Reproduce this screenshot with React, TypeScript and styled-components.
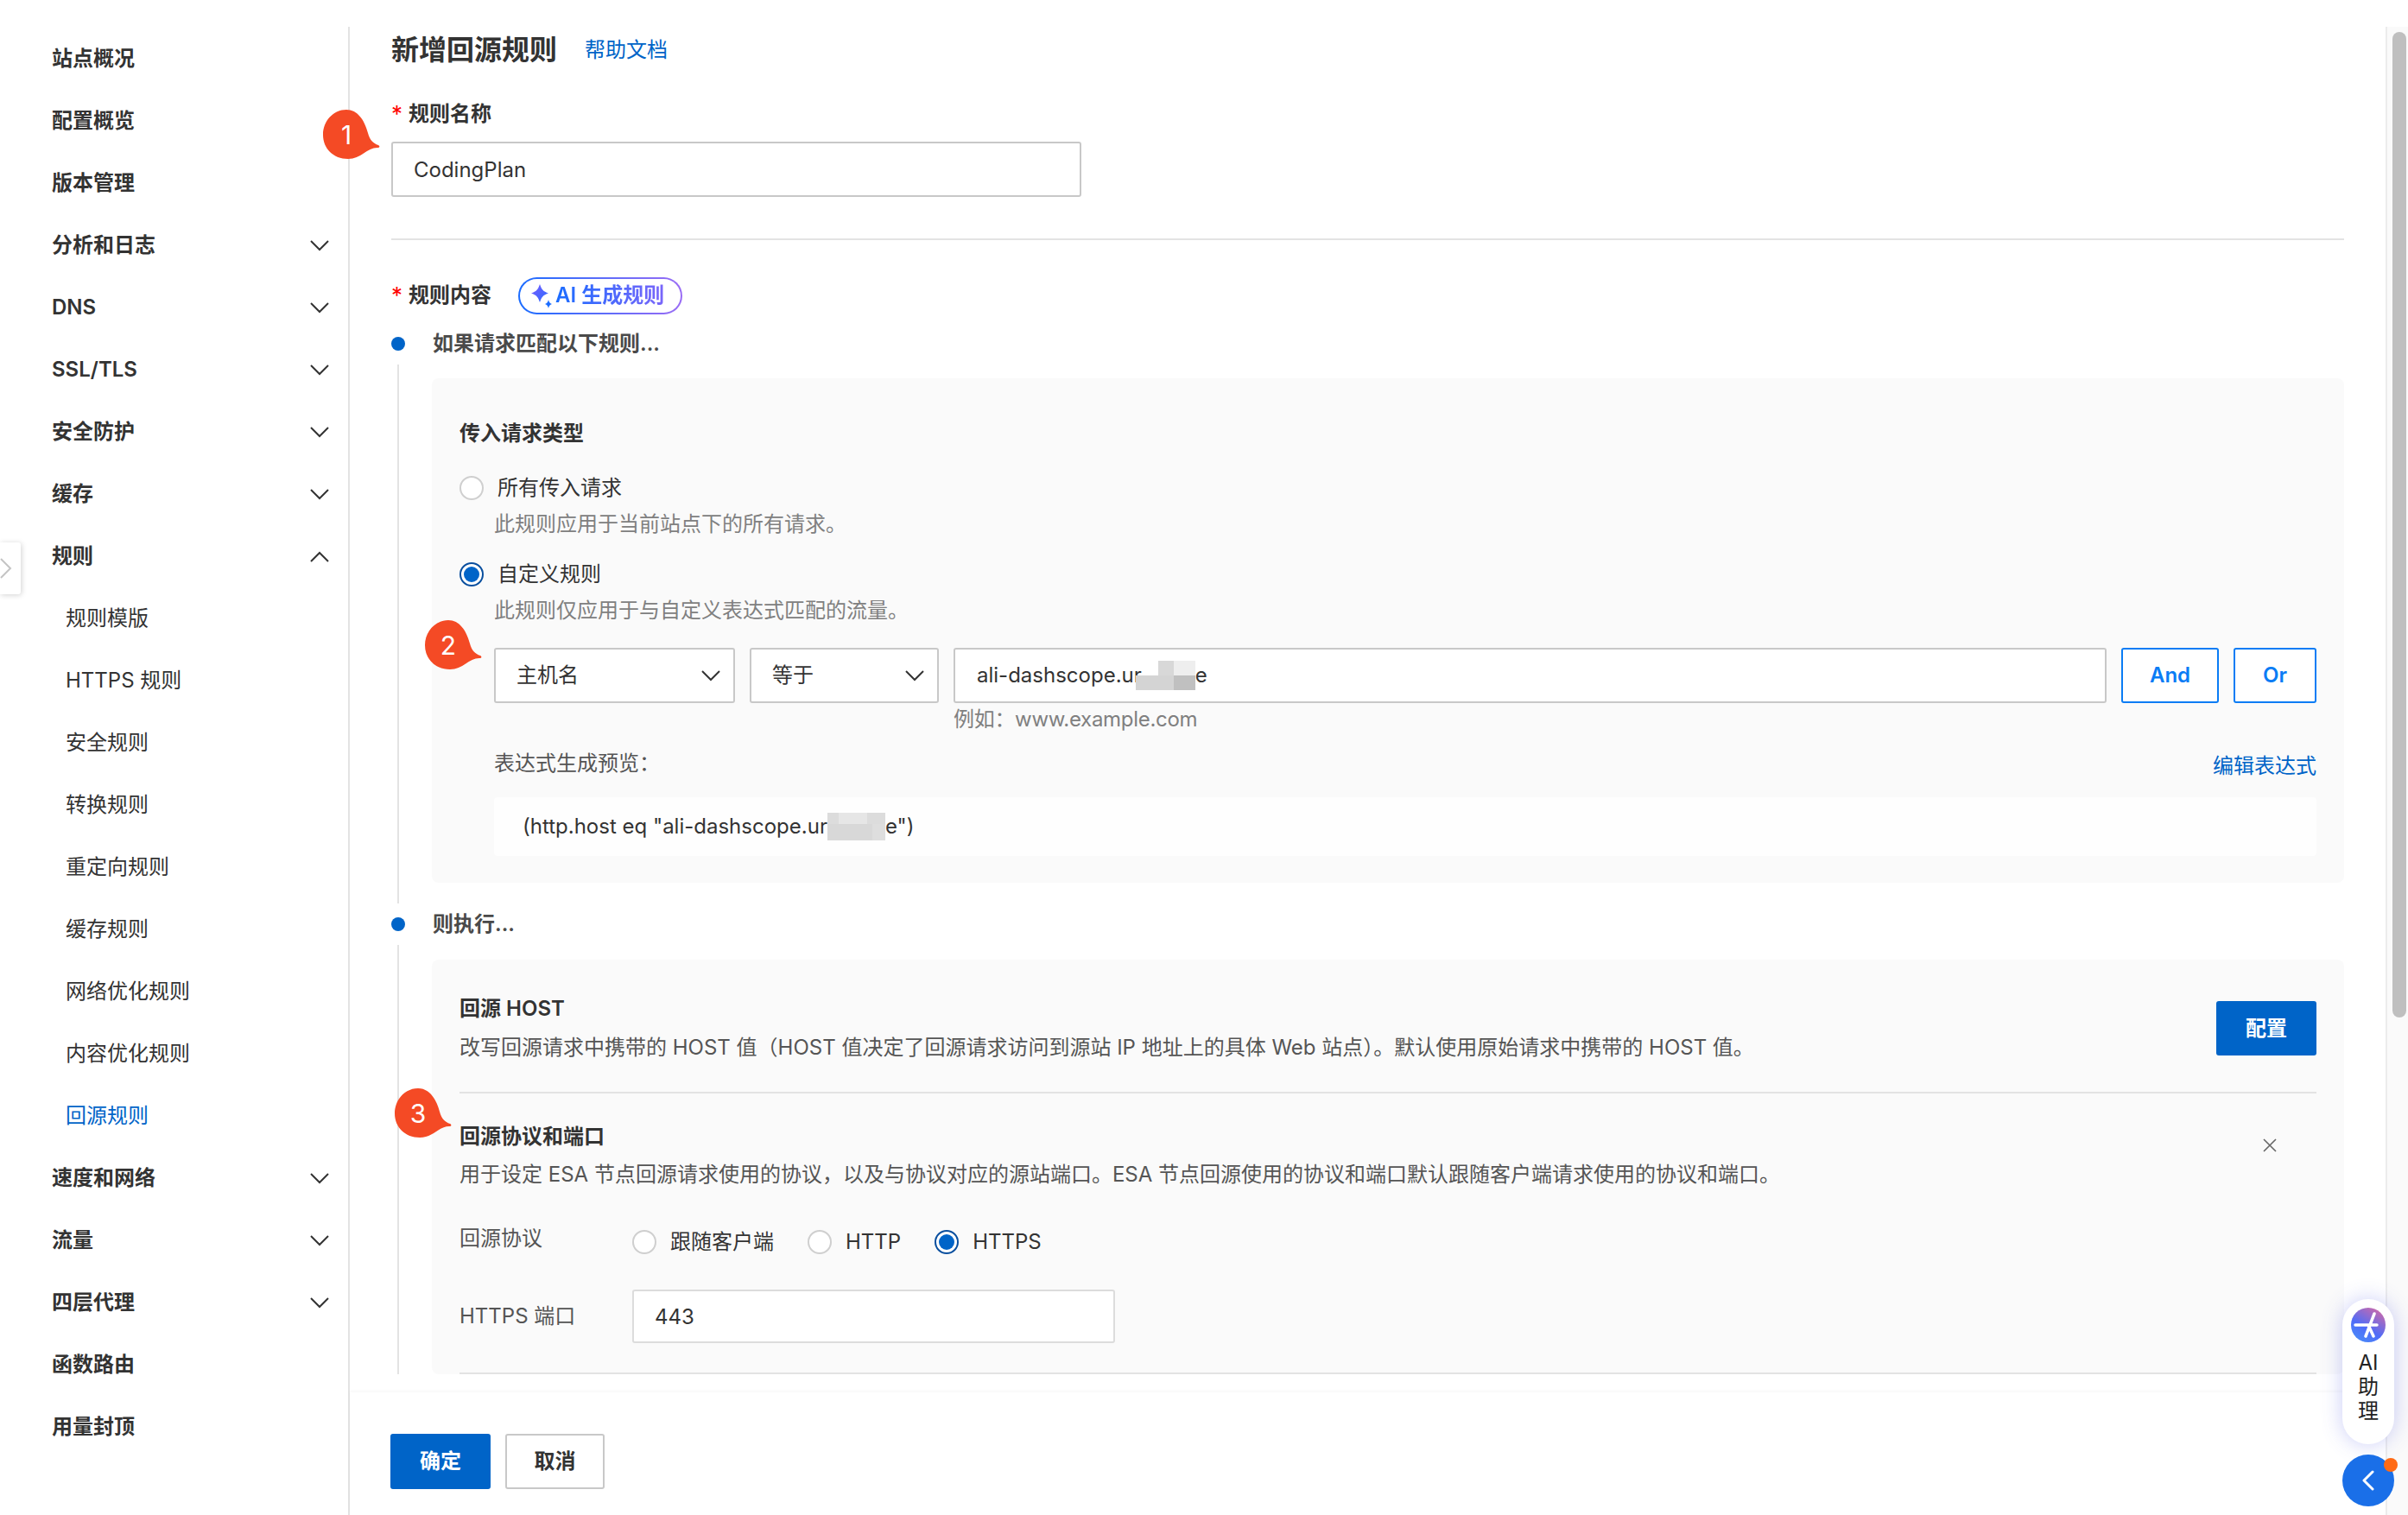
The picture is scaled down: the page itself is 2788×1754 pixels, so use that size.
import React from "react";
import styled, { createGlobalStyle } from "styled-components";

const GlobalStyle = createGlobalStyle`
  html, body {
    margin: 0;
    padding: 0;
    width: 2788px;
    height: 1754px;
    overflow: hidden;
    background: #fff;
  }
  * { box-sizing: border-box; }
  body {
    font-family: Inter, "Noto Sans CJK SC", sans-serif;
    font-size: 24px;
    line-height: 36px;
    color: #333;
  }
`;

const Shell = styled.div`
  display: flex;
  position: relative;
  width: 2788px;
  height: 1754px;
  padding-top: 31px;
`;

/* sidebar */
const Sidebar = styled.nav`
  width: 405px;
  flex: none;
  border-right: 2px solid #e3e3e3;
  padding-top: 1px;
`;

const NavRow = styled.div<{ $sub?: boolean; $active?: boolean }>`
  height: 72px;
  display: flex;
  align-items: center;
  justify-content: space-between;
  padding-left: ${(p) => (p.$sub ? "76px" : "60px")};
  padding-right: 22px;
  font-weight: ${(p) => (p.$sub ? 400 : 600)};
  color: ${(p) => (p.$active ? "#0064c8" : "#333")};
`;

const CollapseTab = styled.div`
  position: absolute;
  left: 0;
  top: 628px;
  width: 24px;
  height: 60px;
  background: #fff;
  border-radius: 0 3px 3px 0;
  box-shadow: 1px 1px 6px rgba(0, 0, 0, 0.18);
  display: flex;
  align-items: center;
`;

/* main column */
const Main = styled.main`
  flex: 1;
  min-width: 0;
  display: flex;
  flex-direction: column;
`;

const Content = styled.div`
  flex: 1;
  min-height: 0;
  overflow: hidden;
  padding: 0 48px;
`;

const TitleRow = styled.div`
  height: 52px;
  padding-top: 1px;
  display: flex;
  align-items: center;
  gap: 32px;
`;

const Title = styled.h1`
  margin: 0;
  font-size: 32px;
  font-weight: 600;
  color: #333;
`;

const Link = styled.a`
  color: #0064c8;
  font-size: 24px;
`;

const FieldLabel = styled.div<{ $top: number }>`
  margin-top: ${(p) => p.$top}px;
  height: 36px;
  display: flex;
  align-items: center;
  font-weight: 600;
  &::before {
    content: "*";
    color: #f00;
    width: 20px;
    font-size: 26px;
    font-weight: 400;
  }
`;

const TextInput = styled.input<{ $width: number; $top: number; $height: number; $border: string }>`
  display: block;
  width: ${(p) => p.$width}px;
  height: ${(p) => p.$height}px;
  margin-top: ${(p) => p.$top}px;
  border: 2px solid ${(p) => p.$border};
  border-radius: 3px;
  padding: 0 24px;
  background: #fff;
  outline: none;
  font: inherit;
  color: #333;
`;

const Divider = styled.hr<{ $top: number }>`
  margin: ${(p) => p.$top}px 0 0;
  border: 0;
  height: 2px;
  background: #e3e3e3;
`;

const ContentLabelRow = styled.div`
  margin-top: 42px;
  height: 44px;
  display: flex;
  align-items: center;
  gap: 31px;
`;

const AiPill = styled.button`
  width: 190px;
  height: 43px;
  border-radius: 22px;
  border: 2px solid transparent;
  background: linear-gradient(#fff, #fff) padding-box,
    linear-gradient(90deg, #1a6cff, #9a6cf5) border-box;
  display: flex;
  align-items: center;
  padding: 0 0 0 12px;
  gap: 3px;
  font: inherit;
`;

const GradientText = styled.span`
  background: linear-gradient(90deg, #1a6cff, #7a66fa);
  -webkit-background-clip: text;
  background-clip: text;
  color: transparent;
  font-weight: 600;
`;

const StepHead = styled.div<{ $top: number }>`
  margin-top: ${(p) => p.$top}px;
  height: 36px;
  display: flex;
  align-items: center;
  gap: 32px;
  font-weight: 600;
  color: #4a4a4a;
  &::before {
    content: "";
    width: 16px;
    height: 16px;
    border-radius: 50%;
    background: #0064c8;
  }
`;

const StepBody = styled.div<{ $pad: number; $bottom: number }>`
  margin: 6px 0 0 7px;
  border-left: 2px solid #e3e3e3;
  padding: ${(p) => p.$pad}px 0 ${(p) => p.$bottom}px 38px;
`;

const Panel = styled.section<{ $pad: number; $bottom: number }>`
  background: #fafafa;
  border-radius: 8px;
  padding: ${(p) => p.$pad}px 32px ${(p) => p.$bottom}px 32px;
`;

const SectionTitle = styled.div<{ $top?: number }>`
  margin-top: ${(p) => p.$top ?? 0}px;
  height: 36px;
  font-weight: 600;
  color: #333;
`;

const Desc = styled.div<{ $top: number; $indent?: number; $tone?: string }>`
  margin-top: ${(p) => p.$top}px;
  margin-left: ${(p) => p.$indent ?? 0}px;
  height: 36px;
  color: ${(p) => p.$tone ?? "#808080"};
`;

const RadioRow = styled.label<{ $top: number }>`
  margin-top: ${(p) => p.$top}px;
  height: 36px;
  display: flex;
  align-items: center;
  gap: 16px;
`;

const RadioDot = styled.span<{ $on?: boolean }>`
  flex: none;
  width: 28px;
  height: 28px;
  border-radius: 50%;
  background: #fff;
  border: 2px solid ${(p) => (p.$on ? "#0a4f9e" : "#cfcfcf")};
  display: flex;
  align-items: center;
  justify-content: center;
  &::after {
    content: "";
    display: ${(p) => (p.$on ? "block" : "none")};
    width: 18px;
    height: 18px;
    border-radius: 50%;
    background: #0064c8;
  }
`;

const ConditionGrid = styled.div`
  margin: 25px 0 0 40px;
  display: grid;
  grid-template-columns: 279px 219px 1335px 113px 96px;
  grid-auto-rows: auto;
  column-gap: 17px;
`;

const Select = styled.div`
  height: 64px;
  background: #fff;
  border: 2px solid #c8c8c8;
  border-radius: 3px;
  display: flex;
  align-items: center;
  justify-content: space-between;
  padding: 0 15px 0 24px;
`;

const ValueBox = styled.div`
  height: 64px;
  background: #fff;
  border: 2px solid #c8c8c8;
  border-radius: 3px;
  display: flex;
  align-items: center;
  padding-left: 25px;
  color: #333;
`;

const OutlineBtn = styled.button`
  height: 64px;
  background: #fff;
  border: 2px solid #0a7cf5;
  border-radius: 3px;
  color: #0a7cf5;
  font: inherit;
  font-weight: 600;
`;

const Hint = styled.div`
  grid-column: 3;
  margin-top: 1px;
  height: 36px;
  color: #808080;
  letter-spacing: -0.3px;
`;

const PreviewHead = styled.div`
  margin: 15px 0 0 40px;
  display: flex;
  justify-content: space-between;
  height: 36px;
  color: #555;
`;

const PreviewLink = styled(Link)`
  padding-top: 3px;
`;

const PreviewBox = styled.div`
  margin: 21px 0 0 40px;
  height: 68px;
  background: #fefefe;
  border-radius: 4px;
  display: flex;
  align-items: center;
  padding-left: 33px;
  color: #333;
  white-space: pre;
`;

const ActionRow = styled.div`
  display: flex;
  align-items: center;
  justify-content: space-between;
`;

const PrimaryBtn = styled.button<{ $width: number; $height: number }>`
  width: ${(p) => p.$width}px;
  height: ${(p) => p.$height}px;
  background: #0064c8;
  border: 0;
  border-radius: 3px;
  color: #fff;
  font: inherit;
  font-weight: 600;
`;

const CloseWrap = styled.span`
  margin: 8px 46px 0 0;
  display: flex;
`;

const FormRow = styled.div<{ $top: number }>`
  margin-top: ${(p) => p.$top}px;
  display: grid;
  grid-template-columns: 200px 1fr;
  align-items: center;
  color: #555;
`;

const ProtoLabel = styled.span`
  margin-top: -8px;
`;

const RadioGroup = styled.div`
  height: 36px;
  display: flex;
  align-items: center;
  color: #333;
`;

const RadioOption = styled.label<{ $gapAfter: number }>`
  display: flex;
  align-items: center;
  gap: 16px;
  margin-right: ${(p) => p.$gapAfter}px;
`;

const Footer = styled.footer`
  height: 142px;
  flex: none;
  background: #fff;
  box-shadow: 0 -2px 4px rgba(0, 0, 0, 0.03);
  padding: 48px 47px;
  display: flex;
  align-items: flex-start;
  gap: 17px;
`;

const CancelBtn = styled.button`
  width: 115px;
  height: 64px;
  background: #fff;
  border: 2px solid #c8c8c8;
  border-radius: 3px;
  font: inherit;
  font-weight: 600;
  color: #333;
`;

/* scrollbar */
const ScrollTrack = styled.div`
  flex: none;
  width: 26px;
  background: #fafafa;
  border-left: 2px solid #ececec;
  padding: 6px 2px 0 6px;
`;

const ScrollThumb = styled.div`
  width: 16px;
  height: 1141px;
  border-radius: 8px;
  background: #bfbfbf;
`;

/* numbered callouts */
const Callout = styled.div<{ $x: number; $y: number }>`
  position: absolute;
  left: ${(p) => p.$x}px;
  top: ${(p) => p.$y}px;
  width: 66px;
  height: 57px;
  z-index: 3;
`;

const CalloutNum = styled.span`
  position: absolute;
  left: 0;
  top: 0;
  width: 54px;
  height: 57px;
  display: flex;
  align-items: center;
  justify-content: center;
  color: #fff;
  font-size: 30px;
`;

/* floating assistant */
const AssistantPill = styled.div`
  position: absolute;
  left: 2712px;
  top: 1504px;
  width: 60px;
  height: 168px;
  border-radius: 30px;
  background: #fff;
  box-shadow: 0 0 24px rgba(80, 90, 230, 0.3);
  display: flex;
  flex-direction: column;
  align-items: center;
  padding-top: 10px;
  z-index: 4;
`;

const AssistantText = styled.div`
  margin-top: 10px;
  font-size: 24px;
  line-height: 28px;
  text-align: center;
  color: #222;
  width: 24px;
`;

const AssistantToggle = styled.div`
  position: absolute;
  left: 2712px;
  top: 1684px;
  width: 60px;
  height: 60px;
  border-radius: 50%;
  background: #1a6fe8;
  display: flex;
  align-items: center;
  justify-content: center;
  z-index: 4;
  &::after {
    content: "";
    position: absolute;
    right: -4px;
    top: 4px;
    width: 16px;
    height: 16px;
    border-radius: 50%;
    background: #ff6a14;
  }
`;

const MosaicSlot = styled.svg`
  margin-left: -7px;
`;

const Chevron = ({ up, w = 22, color = "#333" }: { up?: boolean; w?: number; color?: string }) => (
  <svg width={w} height={13} viewBox="0 0 22 13" fill="none">
    <path d={up ? "M1 12 L11 2 L21 12" : "M1 1 L11 11 L21 1"} stroke={color} strokeWidth="2" />
  </svg>
);

const CalloutShape = () => (
  <svg width="66" height="57" viewBox="0 0 66 57">
    <path
      d="M27 0C40 0 48 12 52 27C54 35 58 39 64 41C66 42 66 44 63 44C51 44 44 57 29 57C12 57 0 45 0 29C0 13 12 0 27 0Z"
      fill="#f44a25"
    />
  </svg>
);

const Sparkle = () => (
  <svg width="26" height="32" viewBox="0 0 26 32">
    <defs>
      <linearGradient id="spark" x1="0" y1="0" x2="1" y2="1">
        <stop offset="0" stopColor="#7a5cff" />
        <stop offset="1" stopColor="#2a6cff" />
      </linearGradient>
    </defs>
    <path d="M11 3C13 9 15 11.500 21 13.500C15 15.500 13 18 11 24C9 18 7 15.500 1 13.500C7 11.500 9 9 11 3Z" fill="url(#spark)" />
    <path d="M21 21C21.800 24 22.500 25 25 26C22.500 27 21.800 28 21 31C20.200 28 19.500 27 17 26C19.500 25 20.200 24 21 21Z" fill="#1a6cff" />
  </svg>
);

const AiLogo = () => (
  <svg width="40" height="40" viewBox="0 0 40 40">
    <defs>
      <linearGradient id="logo" x1="0.2" y1="1" x2="0.8" y2="0">
        <stop offset="0" stopColor="#4a8cf8" />
        <stop offset="0.4" stopColor="#4f6cf8" />
        <stop offset="1" stopColor="#d06aa8" />
      </linearGradient>
    </defs>
    <circle cx="20" cy="20" r="20" fill="url(#logo)" />
    <path d="M5 20H30M27 7L17 33M20 20L26 33" stroke="#fff" strokeWidth="3.500" strokeLinecap="round" fill="none" />
  </svg>
);

const MosaicA = () => (
  <MosaicSlot width="69" height="34" viewBox="0 0 69 34">
    <rect x="26" y="0" width="18" height="17" fill="#d8d8d8" />
    <rect x="44" y="0" width="25" height="17" fill="#eeeeee" />
    <rect x="0" y="17" width="44" height="17" fill="#d4d4d4" />
    <rect x="44" y="17" width="25" height="17" fill="#c0c0c0" />
  </MosaicSlot>
);

const MosaicB = () => (
  <svg width="67" height="32" viewBox="0 0 67 32">
    <rect x="0" y="0" width="13" height="13" fill="#dcdcdc" />
    <rect x="13" y="0" width="33" height="13" fill="#e6e6e6" />
    <rect x="46" y="0" width="21" height="13" fill="#dcdcdc" />
    <rect x="0" y="13" width="52" height="19" fill="#d8d8d8" />
    <rect x="52" y="13" width="15" height="19" fill="#dedede" />
  </svg>
);

const navItems = [
  { label: "站点概况" },
  { label: "配置概览" },
  { label: "版本管理" },
  { label: "分析和日志", arrow: true },
  { label: "DNS", arrow: true },
  { label: "SSL/TLS", arrow: true },
  { label: "安全防护", arrow: true },
  { label: "缓存", arrow: true },
  { label: "规则", open: true },
  { label: "规则模版", sub: true },
  { label: "HTTPS 规则", sub: true },
  { label: "安全规则", sub: true },
  { label: "转换规则", sub: true },
  { label: "重定向规则", sub: true },
  { label: "缓存规则", sub: true },
  { label: "网络优化规则", sub: true },
  { label: "内容优化规则", sub: true },
  { label: "回源规则", sub: true, active: true },
  { label: "速度和网络", arrow: true },
  { label: "流量", arrow: true },
  { label: "四层代理", arrow: true },
  { label: "函数路由" },
  { label: "用量封顶" },
];

export default function App() {
  return (
    <Shell>
      <GlobalStyle />
      <Sidebar>
        {navItems.map((item) => (
          <NavRow key={item.label} $sub={item.sub} $active={item.active}>
            <span>{item.label}</span>
            {item.arrow && <Chevron />}
            {item.open && <Chevron up />}
          </NavRow>
        ))}
      </Sidebar>
      <CollapseTab>
        <svg width="14" height="24" viewBox="0 0 14 24" fill="none">
          <path d="M1 1 L12 12 L1 23" stroke="#c4c4c4" strokeWidth="2" />
        </svg>
      </CollapseTab>

      <Main>
        <Content>
          <TitleRow>
            <Title>新增回源规则</Title>
            <Link>帮助文档</Link>
          </TitleRow>
          <FieldLabel $top={31}>规则名称</FieldLabel>
          <TextInput readOnly value="CodingPlan" $width={799} $height={64} $top={14} $border="#c8c8c8" />
          <Divider $top={48} />
          <ContentLabelRow>
            <FieldLabel $top={0}>规则内容</FieldLabel>
            <AiPill>
              <Sparkle />
              <GradientText>AI 生成规则</GradientText>
            </AiPill>
          </ContentLabelRow>

          <StepHead $top={16}>如果请求匹配以下规则...</StepHead>
          <StepBody $pad={16} $bottom={24}>
            <Panel $pad={46} $bottom={31}>
              <SectionTitle>传入请求类型</SectionTitle>
              <RadioRow $top={27}>
                <RadioDot />
                所有传入请求
              </RadioRow>
              <Desc $top={6} $indent={40}>此规则应用于当前站点下的所有请求。</Desc>
              <RadioRow $top={22}>
                <RadioDot $on />
                自定义规则
              </RadioRow>
              <Desc $top={6} $indent={40}>此规则仅应用于与自定义表达式匹配的流量。</Desc>
              <ConditionGrid>
                <Select>
                  主机名
                  <Chevron />
                </Select>
                <Select>
                  等于
                  <Chevron />
                </Select>
                <ValueBox>
                  ali-dashscope.ur
                  <MosaicA />
                  e
                </ValueBox>
                <OutlineBtn>And</OutlineBtn>
                <OutlineBtn>Or</OutlineBtn>
                <Hint>例如：www.example.com</Hint>
              </ConditionGrid>
              <PreviewHead>
                <span>表达式生成预览：</span>
                <PreviewLink>编辑表达式</PreviewLink>
              </PreviewHead>
              <PreviewBox>
                (http.host eq "ali-dashscope.ur
                <MosaicB />
                e")
              </PreviewBox>
            </Panel>
          </StepBody>

          <StepHead $top={6}>则执行...</StepHead>
          <StepBody $pad={17} $bottom={0}>
            <Panel $pad={39} $bottom={0}>
              <ActionRow>
                <div>
                  <SectionTitle>回源 HOST</SectionTitle>
                  <Desc $top={9} $tone="#555">
                    改写回源请求中携带的 HOST 值（HOST 值决定了回源请求访问到源站 IP 地址上的具体 Web 站点）。默认使用原始请求中携带的 HOST 值。
                  </Desc>
                </div>
                <PrimaryBtn $width={116} $height={63}>配置</PrimaryBtn>
              </ActionRow>
              <Divider $top={33} />
              <ActionRow>
                <div>
                  <SectionTitle $top={32}>回源协议和端口</SectionTitle>
                  <Desc $top={8} $tone="#555">
                    用于设定 ESA 节点回源请求使用的协议，以及与协议对应的源站端口。ESA 节点回源使用的协议和端口默认跟随客户端请求使用的协议和端口。
                  </Desc>
                </div>
                <CloseWrap>
                  <svg width="16" height="16" viewBox="0 0 16 16" fill="none">
                    <path d="M1 1L15 15M15 1L1 15" stroke="#666" strokeWidth="1.6" />
                  </svg>
                </CloseWrap>
              </ActionRow>
              <FormRow $top={42}>
                <ProtoLabel>回源协议</ProtoLabel>
                <RadioGroup>
                  <RadioOption $gapAfter={39}>
                    <RadioDot />
                    跟随客户端
                  </RadioOption>
                  <RadioOption $gapAfter={39}>
                    <RadioDot />
                    HTTP
                  </RadioOption>
                  <RadioOption $gapAfter={0}>
                    <RadioDot $on />
                    HTTPS
                  </RadioOption>
                </RadioGroup>
              </FormRow>
              <FormRow $top={37}>
                <span>HTTPS 端口</span>
                <TextInput readOnly value="443" $width={559} $height={62} $top={0} $border="#dcdcdc" />
              </FormRow>
              <Divider $top={34} />
            </Panel>
          </StepBody>
        </Content>
        <Footer>
          <PrimaryBtn $width={116} $height={64}>确定</PrimaryBtn>
          <CancelBtn>取消</CancelBtn>
        </Footer>
      </Main>

      <ScrollTrack>
        <ScrollThumb />
      </ScrollTrack>

      <Callout $x={374} $y={127}>
        <CalloutShape />
        <CalloutNum>1</CalloutNum>
      </Callout>
      <Callout $x={492} $y={718}>
        <CalloutShape />
        <CalloutNum>2</CalloutNum>
      </Callout>
      <Callout $x={457} $y={1260}>
        <CalloutShape />
        <CalloutNum>3</CalloutNum>
      </Callout>

      <AssistantPill>
        <AiLogo />
        <AssistantText>AI 助理</AssistantText>
      </AssistantPill>
      <AssistantToggle>
        <svg width="14" height="24" viewBox="0 0 14 24" fill="none">
          <path d="M12 2 L2 12 L12 22" stroke="#fff" strokeWidth="3" strokeLinecap="round" strokeLinejoin="round" />
        </svg>
      </AssistantToggle>
    </Shell>
  );
}
